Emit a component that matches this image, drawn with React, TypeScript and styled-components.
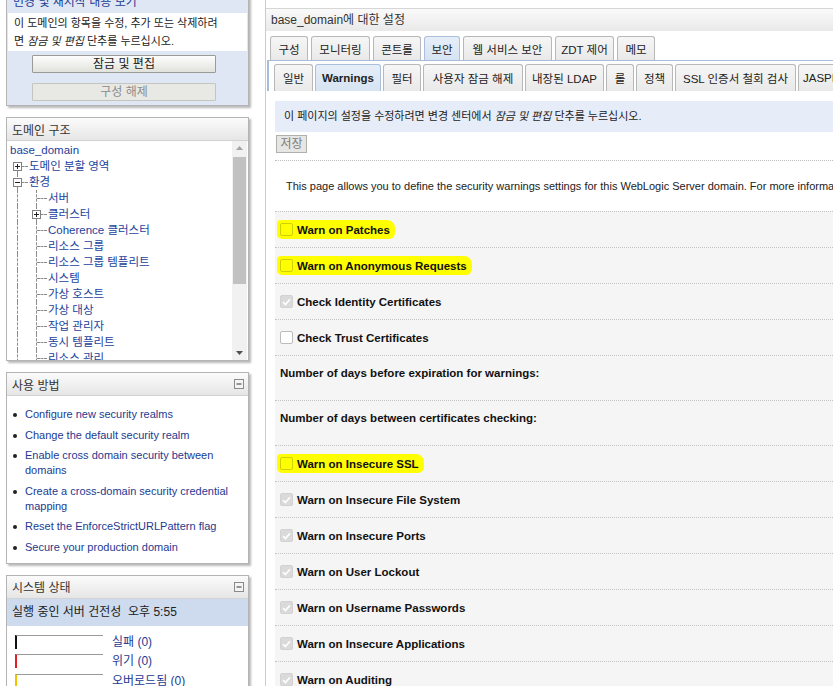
import * as React from "react";
import styled, { createGlobalStyle, css } from "styled-components";

const GlobalStyle = createGlobalStyle`
  html, body {
    margin: 0;
    padding: 0;
    background: #fff;
    overflow: hidden;
  }
  body {
    font-family: "Liberation Sans", "Noto Sans CJK KR", sans-serif;
    font-size: 11px;
    color: #222;
  }
`;

const Page = styled.div`
  display: flex;
  align-items: flex-start;
  width: 833px;
  height: 686px;
  overflow: hidden;
`;

/* ---------- sidebar ---------- */

const Sidebar = styled.aside`
  width: 243px;
  flex-shrink: 0;
  margin: -10px 0 0 6px;
  display: flex;
  flex-direction: column;
  gap: 11px;
`;

const Box = styled.section<{ $tint?: boolean }>`
  background: ${(p) => (p.$tint ? "#dfe7f5" : "#fff")};
  border: 1px solid #b4b4b4;
  box-shadow: 2px 2px 2px rgba(0, 0, 0, 0.28);
`;

const BoxHeader = styled.div`
  display: flex;
  align-items: center;
  justify-content: space-between;
  height: 22px;
  padding: 0 4px 0 5px;
  background: linear-gradient(#fbfbfb, #e6e6e6);
  border-bottom: 1px solid #d2d2d2;
  font-size: 12px;
  color: #333;
`;

const ChangeLink = styled.div`
  height: 22px;
  line-height: 22px;
  padding-left: 6px;
  font-size: 12px;
  color: #1a3d96;
`;

const ChangeNote = styled.p`
  margin: 0 1px;
  padding: 1px 6px;
  background: #fff;
  line-height: 18px;
  font-size: 11px;
  color: #222;
`;

const ButtonStack = styled.div`
  display: flex;
  flex-direction: column;
  gap: 10px;
  padding: 4px 0 4px 25px;
`;

const SideButton = styled.button<{ $disabled?: boolean }>`
  width: 184px;
  height: 18px;
  padding: 0;
  font-family: inherit;
  font-size: 12px;
  line-height: 16px;
  border-radius: 1px;
  ${(p) =>
    p.$disabled
      ? css`
          background: #e8e8e4;
          border: 1px solid #c4c4c0;
          color: #8c8c8c;
        `
      : css`
          background: linear-gradient(#fdfdfd, #e2e2dc);
          border: 1px solid #9a9a96;
          color: #222;
        `}
`;

const TreeBody = styled.div`
  display: flex;
  height: 219px;
`;

const TreeList = styled.div`
  flex: 1;
  min-width: 0;
  overflow: hidden;
  padding: 1px 0 0 3px;
`;

const TreeRow = styled.div`
  display: flex;
  align-items: center;
  height: 16px;
  white-space: nowrap;
`;

const TreeLabel = styled.span`
  font-size: 11.5px;
  color: #1c3f9c;
  line-height: 16px;
`;

type GuideKind = "pass" | "branch" | "first";

const Guide = styled.span<{ $kind: GuideKind }>`
  position: relative;
  width: 19px;
  height: 16px;
  flex-shrink: 0;

  &::before {
    content: "";
    position: absolute;
    left: 7px;
    top: ${(p) => (p.$kind === "first" ? "8px" : "0")};
    bottom: 0;
    border-left: 1px dashed #8a8a8a;
  }

  ${(p) =>
    p.$kind !== "pass" &&
    css`
      &::after {
        content: "";
        position: absolute;
        left: 8px;
        right: 1px;
        top: 8px;
        border-top: 1px dashed #8a8a8a;
      }
    `}
`;

const Toggle = styled.svg`
  position: absolute;
  left: 3px;
  top: 4px;
  z-index: 1;
`;

const Scrollbar = styled.div`
  width: 15px;
  margin-right: 1px;
  background: #f1f1f1;
  display: flex;
  flex-direction: column;
  align-items: center;
`;

const ScrollArrow = styled.div`
  height: 14px;
  display: flex;
  align-items: center;
  justify-content: center;
`;

const ScrollThumb = styled.div`
  width: 13px;
  height: 127px;
  margin-top: 2px;
  background: #c1c1c1;
`;

const ScrollTrack = styled.div`
  flex: 1;
`;

const HelpList = styled.ul`
  margin: 0;
  padding: 11px 8px 8px 6px;
  list-style: none;
  display: flex;
  flex-direction: column;
  gap: 5.5px;
`;

const HelpItem = styled.li`
  display: flex;
  gap: 8px;
  line-height: 15px;
  font-size: 11px;
  color: #1d3a91;

  &::before {
    content: "";
    flex-shrink: 0;
    width: 4px;
    height: 4px;
    margin-top: 6px;
    border-radius: 50%;
    background: #222;
  }
`;

const HealthBand = styled.div`
  height: 27px;
  line-height: 27px;
  padding-left: 5px;
  background: #cedbee;
  font-size: 12px;
  color: #222;
  white-space: nowrap;
`;

const HealthList = styled.div`
  padding: 9px 0 0 8px;
  display: flex;
  flex-direction: column;
`;

const HealthRow = styled.div`
  display: flex;
  align-items: flex-start;
  gap: 9px;
  height: 19.5px;
`;

const HealthBar = styled.span<{ $color: string }>`
  width: 86px;
  height: 13px;
  border-top: 1px solid #9a9a9a;
  border-left: 2px solid ${(p) => p.$color};
`;

const HealthLabel = styled.span`
  font-size: 12px;
  line-height: 14px;
  color: #1d3a91;
`;

/* ---------- main ---------- */

const Main = styled.main`
  flex: 1;
  min-width: 0;
  height: 686px;
  margin-left: 16px;
  border-left: 1px solid #cbcbcb;
  overflow: hidden;
  white-space: nowrap;
`;

const TitleBar = styled.div`
  margin-top: 8px;
  height: 22px;
  line-height: 22px;
  padding-left: 5px;
  border-top: 1px solid #d6d6d6;
  background: linear-gradient(#fafafa, #e9e9e9);
  font-size: 12px;
  color: #333;
`;

const TabBar = styled.div`
  display: flex;
  gap: 3px;
  margin-top: 5px;
  padding-left: 4px;
  height: 24px;
`;

const Tab = styled.div<{ $w: number; $active?: boolean; $tall?: boolean }>`
  display: flex;
  align-items: center;
  justify-content: center;
  width: ${(p) => p.$w}px;
  height: ${(p) => (p.$tall ? "27px" : "24px")};
  box-sizing: border-box;
  border: 1px solid ${(p) => (p.$active ? "#a9bfdc" : "#b8b8b8")};
  border-bottom: none;
  border-radius: 3px 3px 0 0;
  background: ${(p) =>
    p.$active ? "linear-gradient(#e6eef8, #d6e3f2)" : "linear-gradient(#f6f6f6, #e9e9e9)"};
  font-size: 11.5px;
  color: #222;
  flex-shrink: 0;
  ${(p) =>
    p.$active &&
    p.$tall &&
    css`
      font-weight: bold;
    `}
`;

const SubPanel = styled.div`
  margin-left: 1px;
  border-top: 1px solid #a7bcd9;
  border-left: 2px solid #a7bcd9;
  padding: 3px 0 0 5px;
`;

const SubTabBar = styled.div`
  display: flex;
  gap: 2px;
  height: 27px;
`;

const Content = styled.div`
  padding-left: 9px;
`;

const Notice = styled.div`
  margin-top: 10px;
  height: 31px;
  line-height: 31px;
  padding-left: 9px;
  background: #e6edf9;
  font-size: 11px;
  color: #222;

  em {
    font-style: italic;
  }
`;

const SaveButton = styled.button`
  margin: 3px 0 0 1px;
  width: 31px;
  height: 18px;
  padding: 0;
  font-family: inherit;
  font-size: 12px;
  line-height: 16px;
  background: #e6e6e4;
  border: 1px solid #b0b0ac;
  color: #7d7d7d;
`;

const Divider = styled.div`
  margin-top: 7px;
  border-top: 1px dotted #bdbdbd;
`;

const Intro = styled.p`
  margin: 0;
  padding: 18px 11px 0;
  height: 32px;
  font-size: 11px;
  line-height: 14px;
  color: #222;
`;

const FieldRow = styled.div<{ $tall?: boolean }>`
  display: flex;
  align-items: ${(p) => (p.$tall ? "flex-start" : "center")};
  height: ${(p) => (p.$tall ? "45px" : "36px")};
  padding: ${(p) => (p.$tall ? "11px 0 0 5px" : "0 0 0 5px")};
  box-sizing: border-box;
  border-top: 1px dotted #c4c4c4;
  background: #f5f5f5;
`;

const Highlight = styled.span<{ $on?: boolean }>`
  display: inline-flex;
  align-items: center;
  gap: 4px;
  ${(p) =>
    p.$on &&
    css`
      margin: 0 -5px 0 -3px;
      padding: 3px 5px 3px 3px;
      background: #ffff00;
      border-radius: 4px 8px 6px 5px;
    `}
`;

type BoxKind = "empty" | "marked" | "locked";

const CheckBox = styled.span<{ $kind: BoxKind }>`
  display: inline-flex;
  align-items: center;
  justify-content: center;
  width: 13px;
  height: 13px;
  box-sizing: border-box;
  border-radius: 2px;
  ${(p) =>
    p.$kind === "empty" &&
    css`
      background: #fff;
      border: 1px solid #bcbcbc;
    `}
  ${(p) =>
    p.$kind === "marked" &&
    css`
      background: transparent;
      border: 1px solid #d0d000;
    `}
  ${(p) =>
    p.$kind === "locked" &&
    css`
      background: #dadada;
      border: 1px solid #d2d2d2;
    `}
`;

const FieldLabel = styled.span`
  font-weight: bold;
  font-size: 11.5px;
  color: #111;
`;

/* ---------- data ---------- */

type TreeItem = { label: string; guides: GuideKind[]; toggle?: "+" | "-" };

const tree: TreeItem[] = [
  { label: "base_domain", guides: [] },
  { label: "도메인 분할 영역", guides: ["first"], toggle: "+" },
  { label: "환경", guides: ["branch"], toggle: "-" },
  { label: "서버", guides: ["pass", "branch"] },
  { label: "클러스터", guides: ["pass", "branch"], toggle: "+" },
  { label: "Coherence 클러스터", guides: ["pass", "branch"] },
  { label: "리소스 그룹", guides: ["pass", "branch"] },
  { label: "리소스 그룹 템플리트", guides: ["pass", "branch"] },
  { label: "시스템", guides: ["pass", "branch"] },
  { label: "가상 호스트", guides: ["pass", "branch"] },
  { label: "가상 대상", guides: ["pass", "branch"] },
  { label: "작업 관리자", guides: ["pass", "branch"] },
  { label: "동시 템플리트", guides: ["pass", "branch"] },
  { label: "리소스 관리", guides: ["pass", "branch"] },
  { label: "시작 및 종료 클래스", guides: ["pass", "branch"] },
];

const helpLinks = [
  "Configure new security realms",
  "Change the default security realm",
  "Enable cross domain security between domains",
  "Create a cross-domain security credential mapping",
  "Reset the EnforceStrictURLPattern flag",
  "Secure your production domain",
];

const health = [
  { label: "실패 (0)", color: "#111" },
  { label: "위기 (0)", color: "#e02020" },
  { label: "오버로드됨 (0)", color: "#f2c200" },
];

const mainTabs = [
  { label: "구성", w: 38 },
  { label: "모니터링", w: 59 },
  { label: "콘트롤", w: 48 },
  { label: "보안", w: 36 },
  { label: "웹 서비스 보안", w: 89 },
  { label: "ZDT 제어", w: 59 },
  { label: "메모", w: 38 },
];

const subTabs = [
  { label: "일반", w: 39 },
  { label: "Warnings", w: 66 },
  { label: "필터", w: 38 },
  { label: "사용자 잠금 해제", w: 100 },
  { label: "내장된 LDAP", w: 79 },
  { label: "롤", w: 28 },
  { label: "정책", w: 37 },
  { label: "SSL 인증서 철회 검사", w: 121 },
  { label: "JASPI", w: 42 },
];

type Field =
  | { type: "check"; label: string; box: BoxKind; mark?: boolean }
  | { type: "number"; label: string };

const fields: Field[] = [
  { type: "check", label: "Warn on Patches", box: "marked", mark: true },
  { type: "check", label: "Warn on Anonymous Requests", box: "marked", mark: true },
  { type: "check", label: "Check Identity Certificates", box: "locked" },
  { type: "check", label: "Check Trust Certificates", box: "empty" },
  { type: "number", label: "Number of days before expiration for warnings:" },
  { type: "number", label: "Number of days between certificates checking:" },
  { type: "check", label: "Warn on Insecure SSL", box: "marked", mark: true },
  { type: "check", label: "Warn on Insecure File System", box: "locked" },
  { type: "check", label: "Warn on Insecure Ports", box: "locked" },
  { type: "check", label: "Warn on User Lockout", box: "locked" },
  { type: "check", label: "Warn on Username Passwords", box: "locked" },
  { type: "check", label: "Warn on Insecure Applications", box: "locked" },
  { type: "check", label: "Warn on Auditing", box: "locked" },
];

/* ---------- small drawings ---------- */

function ToggleBox({ open }: { open: boolean }) {
  return (
    <Toggle width="9" height="9" viewBox="0 0 9 9">
      <rect x="0.5" y="0.5" width="8" height="8" fill="#fff" stroke="#808080" />
      <path d="M2 4.5h5" stroke="#222" />
      {!open && <path d="M4.5 2v5" stroke="#222" />}
    </Toggle>
  );
}

function MinusBox() {
  return (
    <svg width="10" height="10" viewBox="0 0 10 10">
      <rect x="0.5" y="0.5" width="9" height="9" fill="#f4f4f4" stroke="#8a8a8a" />
      <path d="M2.5 5h5" stroke="#333" />
    </svg>
  );
}

function Tick() {
  return (
    <svg width="9" height="8" viewBox="0 0 9 8">
      <path d="M1 4.2l2.4 2.3L8 1.2" fill="none" stroke="#fff" strokeWidth="1.6" />
    </svg>
  );
}

/* ---------- app ---------- */

export default function App() {
  return (
    <>
      <GlobalStyle />
      <Page>
        <Sidebar>
          <Box $tint>
            <ChangeLink>변경 및 재시작 내용 보기</ChangeLink>
            <ChangeNote>
              이 도메인의 항목을 수정, 추가 또는 삭제하려
              <br />면 <i>잠금 및 편집</i> 단추를 누르십시오.
            </ChangeNote>
            <ButtonStack>
              <SideButton>잠금 및 편집</SideButton>
              <SideButton $disabled>구성 해제</SideButton>
            </ButtonStack>
          </Box>

          <Box>
            <BoxHeader>도메인 구조</BoxHeader>
            <TreeBody>
              <TreeList>
                {tree.map((item) => (
                  <TreeRow key={item.label}>
                    {item.guides.map((g, i) => (
                      <Guide key={i} $kind={g}>
                        {i === item.guides.length - 1 && item.toggle && (
                          <ToggleBox open={item.toggle === "-"} />
                        )}
                      </Guide>
                    ))}
                    <TreeLabel>{item.label}</TreeLabel>
                  </TreeRow>
                ))}
              </TreeList>
              <Scrollbar>
                <ScrollArrow>
                  <svg width="7" height="4" viewBox="0 0 7 4">
                    <path d="M0 4L3.5 0L7 4z" fill="#a3a3a3" />
                  </svg>
                </ScrollArrow>
                <ScrollThumb />
                <ScrollTrack />
                <ScrollArrow>
                  <svg width="7" height="4" viewBox="0 0 7 4">
                    <path d="M0 0L3.5 4L7 0z" fill="#505050" />
                  </svg>
                </ScrollArrow>
              </Scrollbar>
            </TreeBody>
          </Box>

          <Box>
            <BoxHeader>
              사용 방법
              <MinusBox />
            </BoxHeader>
            <HelpList>
              {helpLinks.map((l) => (
                <HelpItem key={l}>{l}</HelpItem>
              ))}
            </HelpList>
          </Box>

          <Box>
            <BoxHeader>
              시스템 상태
              <MinusBox />
            </BoxHeader>
            <HealthBand>실행 중인 서버 건전성&nbsp; 오후 5:55</HealthBand>
            <HealthList>
              {health.map((h) => (
                <HealthRow key={h.label}>
                  <HealthBar $color={h.color} />
                  <HealthLabel>{h.label}</HealthLabel>
                </HealthRow>
              ))}
            </HealthList>
          </Box>
        </Sidebar>

        <Main>
          <TitleBar>base_domain에 대한 설정</TitleBar>
          <TabBar>
            {mainTabs.map((t) => (
              <Tab key={t.label} $w={t.w} $active={t.label === "보안"}>
                {t.label}
              </Tab>
            ))}
          </TabBar>
          <SubPanel>
            <SubTabBar>
              {subTabs.map((t) => (
                <Tab key={t.label} $w={t.w} $tall $active={t.label === "Warnings"}>
                  {t.label}
                </Tab>
              ))}
            </SubTabBar>
          </SubPanel>
          <Content>
            <Notice>
              이 페이지의 설정을 수정하려면 변경 센터에서 <em>잠금 및 편집</em> 단추를 누르십시오.
            </Notice>
            <SaveButton disabled>저장</SaveButton>
            <Divider />
            <Intro>
              This page allows you to define the security warnings settings for this WebLogic
              Server domain. For more information, see Security Warnings.
            </Intro>
            {fields.map((f) =>
              f.type === "number" ? (
                <FieldRow key={f.label} $tall>
                  <FieldLabel>{f.label}</FieldLabel>
                </FieldRow>
              ) : (
                <FieldRow key={f.label}>
                  <Highlight $on={f.mark}>
                    <CheckBox $kind={f.box}>{f.box === "locked" && <Tick />}</CheckBox>
                    <FieldLabel>{f.label}</FieldLabel>
                  </Highlight>
                </FieldRow>
              )
            )}
          </Content>
        </Main>
      </Page>
    </>
  );
}
